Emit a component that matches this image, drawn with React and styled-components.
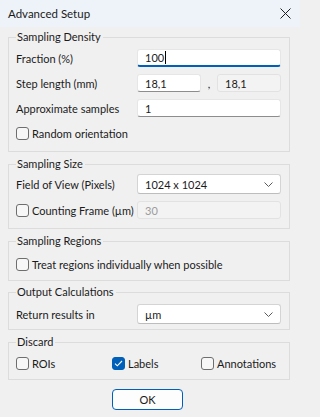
import styled, { createGlobalStyle } from 'styled-components';
import { useState } from 'react';

const GlobalStyle = createGlobalStyle`
  html, body {
    margin: 0;
    padding: 0;
    background: #f0f0f0;
  }
  * {
    box-sizing: border-box;
  }
`;

const Window = styled.div`
  width: 300px;
  height: 417px;
  display: flex;
  flex-direction: column;
  background: #f0f0f0;
  font-family: 'Segoe UI', Lato, 'Noto Sans', sans-serif;
  font-size: 11px;
  color: #1b1b1b;
  overflow: hidden;
`;

const TitleBar = styled.div`
  height: 27px;
  flex: none;
  display: flex;
  align-items: center;
  justify-content: space-between;
  padding: 0 8px 0 8px;
  background: #eef3f9;
  font-size: 11.5px;
  color: #1a1a1a;
`;

const CloseButton = styled.button`
  border: 0;
  background: transparent;
  padding: 0;
  width: 14px;
  height: 14px;
  display: flex;
  align-items: center;
  justify-content: center;
  color: #222;
`;

const Body = styled.div`
  display: flex;
  flex-direction: column;
  padding: 2px 10px 0 8px;
`;

const Group = styled.fieldset`
  margin: 0 0 ${(p) => p.$gap ?? 4}px 0;
  padding: ${(p) => p.$pt}px 8px ${(p) => p.$pb}px 7px;
  border: 1px solid #dcdcdc;
  border-radius: 0;
  min-width: 0;
`;

const Legend = styled.legend`
  padding: 0 2px 0 1px;
  margin-left: 0;
  line-height: 16px;
  color: #1b1b1b;
`;

const Rows = styled.div`
  display: flex;
  flex-direction: column;
  gap: 7px;
`;

const Row = styled.div`
  display: grid;
  grid-template-columns: 121px 1fr;
  align-items: center;
  min-height: 18px;
`;

const Label = styled.span`
  white-space: nowrap;
`;

const Field = styled.div`
  height: 18px;
  display: flex;
  align-items: center;
  padding: 0 7px;
  background: ${(p) => (p.$disabled || p.$readonly ? '#f3f3f3' : '#ffffff')};
  border: 1px solid ${(p) => (p.$disabled || p.$readonly ? '#e2e2e2' : '#e6e6e6')};
  border-bottom: ${(p) =>
    p.$focused
      ? '2px solid #005fb8'
      : p.$disabled || p.$readonly
      ? '1px solid #e2e2e2'
      : '1px solid #8d8d8d'};
  border-radius: 3px;
  color: ${(p) => (p.$disabled ? '#9b9b9b' : '#1b1b1b')};
  white-space: nowrap;
`;

const Caret = styled.span`
  display: inline-block;
  width: 1px;
  height: 13px;
  background: #000;
  margin-left: 1px;
`;

const Pair = styled.div`
  display: grid;
  grid-template-columns: 64px 16px 64px;
  align-items: center;
`;

const Comma = styled.span`
  text-align: center;
  color: #1b1b1b;
`;

const Select = styled.div`
  height: 20px;
  display: flex;
  align-items: center;
  justify-content: space-between;
  padding: 0 7px 0 7px;
  background: #ffffff;
  border: 1px solid #d4d4d4;
  border-bottom-color: #bdbdbd;
  border-radius: 3px;
`;

const CheckRow = styled.label`
  display: flex;
  align-items: center;
  gap: 3px;
  height: 18px;
  white-space: nowrap;
`;

const Box = styled.span`
  width: 13px;
  height: 13px;
  flex: none;
  border-radius: 3px;
  border: 1px solid ${(p) => (p.$checked ? '#005fb8' : '#6e6e6e')};
  background: ${(p) => (p.$checked ? '#005fb8' : '#f7f7f7')};
  display: flex;
  align-items: center;
  justify-content: center;
`;

const CheckGrid = styled.div`
  display: grid;
  grid-template-columns: 96px 89px auto;
  align-items: center;
`;

const Footer = styled.div`
  display: flex;
  justify-content: center;
  padding-top: 9px;
`;

const OkButton = styled.button`
  width: 71px;
  height: 21px;
  font: inherit;
  color: #1b1b1b;
  background: #fdfdfd;
  border: 1px solid #005fb8;
  border-radius: 4px;
  padding: 0;
  margin-left: -3px;
`;

const Chevron = () => (
  <svg width="9" height="5" viewBox="0 0 9 5" fill="none">
    <path d="M0.5 0.5 L4.5 4.5 L8.5 0.5" stroke="#5a5a5a" strokeWidth="1" />
  </svg>
);

const Check = ({ checked, label }) => (
  <CheckRow>
    <Box $checked={checked}>
      {checked && (
        <svg width="9" height="7" viewBox="0 0 9 7" fill="none">
          <path d="M1 3.6 L3.3 5.8 L8 1" stroke="#ffffff" strokeWidth="1.1" />
        </svg>
      )}
    </Box>
    {label}
  </CheckRow>
);

const App = () => {
  const [fraction] = useState('100');

  return (
    <>
      <GlobalStyle />
      <Window>
        <TitleBar>
          Advanced Setup
          <CloseButton aria-label="Close">
            <svg width="11" height="11" viewBox="0 0 11 11" fill="none">
              <path d="M0.5 0.5 L10.5 10.5 M10.5 0.5 L0.5 10.5" stroke="#1f1f1f" strokeWidth="1" />
            </svg>
          </CloseButton>
        </TitleBar>
        <Body>
          <Group $pt={4} $pb={9} $gap={4}>
            <Legend>Sampling Density</Legend>
            <Rows>
              <Row>
                <Label>Fraction (%)</Label>
                <Field $focused>
                  {fraction}
                  <Caret />
                </Field>
              </Row>
              <Row>
                <Label>Step length (mm)</Label>
                <Pair>
                  <Field>18,1</Field>
                  <Comma>,</Comma>
                  <Field $readonly>18,1</Field>
                </Pair>
              </Row>
              <Row>
                <Label>Approximate samples</Label>
                <Field>1</Field>
              </Row>
              <Check label="Random orientation" />
            </Rows>
          </Group>

          <Group $pt={2} $pb={9}>
            <Legend>Sampling Size</Legend>
            <Rows>
              <Row>
                <Label>Field of View (Pixels)</Label>
                <Select>
                  1024 x 1024
                  <Chevron />
                </Select>
              </Row>
              <Row>
                <Check label="Counting Frame (µm)" />
                <Field $disabled>30</Field>
              </Row>
            </Rows>
          </Group>

          <Group $pt={6} $pb={7} $gap={3}>
            <Legend>Sampling Regions</Legend>
            <Check label="Treat regions individually when possible" />
          </Group>

          <Group $pt={4} $pb={5}>
            <Legend>Output Calculations</Legend>
            <Row>
              <Label>Return results in</Label>
              <Select>
                µm
                <Chevron />
              </Select>
            </Row>
          </Group>

          <Group $pt={4} $pb={7} $gap={0}>
            <Legend>Discard</Legend>
            <CheckGrid>
              <Check label="ROIs" />
              <Check checked label="Labels" />
              <Check label="Annotations" />
            </CheckGrid>
          </Group>

          <Footer>
            <OkButton>OK</OkButton>
          </Footer>
        </Body>
      </Window>
    </>
  );
};

export default App;
